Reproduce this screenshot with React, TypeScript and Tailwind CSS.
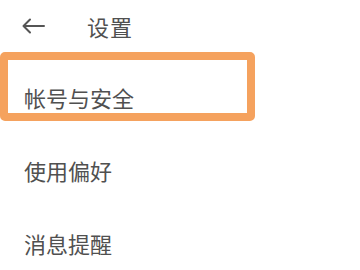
import React from 'react';

const items = ['帐号与安全', '使用偏好', '消息提醒'];

export default function App() {
  return (
    <div
      className="relative w-[360px] h-[270px] bg-white overflow-hidden text-[#505050]"
      style={{ fontFamily: '"Noto Sans CJK SC", "Noto Sans", sans-serif' }}
    >
      {/* Header */}
      <div className="h-[52px] flex items-center pl-[22px]">
        <svg width="23" height="16" viewBox="0 0 23 16" fill="none" className="shrink-0">
          <path d="M22 8H1.5M8 1.5L1.5 8 8 14.5" stroke="#555555" strokeWidth="2" strokeLinecap="round" strokeLinejoin="round" />
        </svg>
        <span className="ml-[42px] text-[22px] tracking-[1px] leading-none">设置</span>
      </div>

      {/* List */}
      <div className="pt-[8px] flex flex-col">
        {items.map((t) => (
          <div key={t} className="h-[73px] flex items-center pl-[24px] text-[22px] leading-none">
            {t}
          </div>
        ))}
      </div>

      {/* Highlight annotation */}
      <div className="absolute left-0 top-[52px] w-[255px] h-[69px] border-[8px] border-[#f5a25e] rounded-[5px]" />
    </div>
  );
}
